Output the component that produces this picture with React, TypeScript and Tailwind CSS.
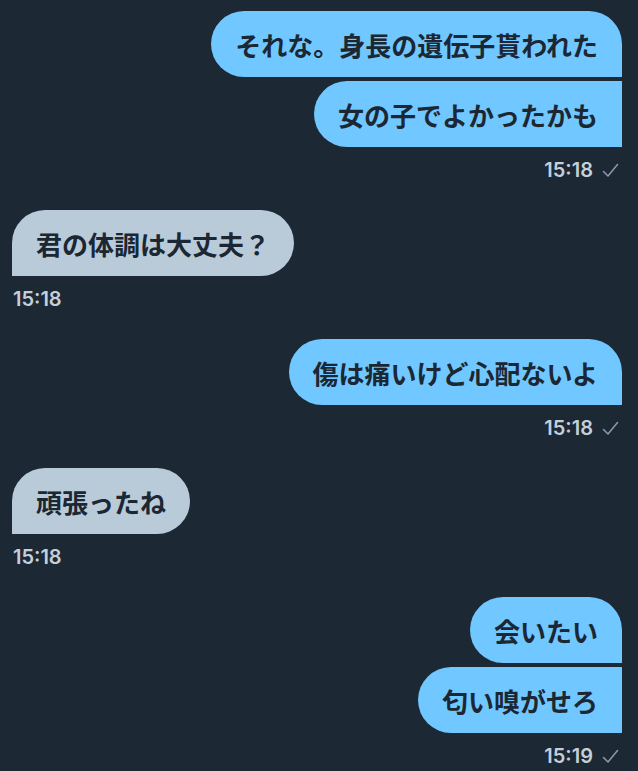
import React from "react";

type Group = { mine: boolean; msgs: string[]; time: string };

const groups: Group[] = [
  { mine: true, msgs: ["それな。身長の遺伝子貰われた", "女の子でよかったかも"], time: "15:18" },
  { mine: false, msgs: ["君の体調は大丈夫？"], time: "15:18" },
  { mine: true, msgs: ["傷は痛いけど心配ないよ"], time: "15:18" },
  { mine: false, msgs: ["頑張ったね"], time: "15:18" },
  { mine: true, msgs: ["会いたい", "匂い嗅がせろ"], time: "15:19" },
];

function Check() {
  return (
    <svg width="17" height="15" viewBox="0 0 17 15" fill="none" className="ml-[9px]">
      <path d="M1.5 8.5 L6 13 L15.5 1.5" stroke="#8a98a6" strokeWidth="1.6" strokeLinecap="round" strokeLinejoin="round" />
    </svg>
  );
}

function Bubble({ text, mine, first }: { text: string; mine: boolean; first: boolean }) {
  const shape = mine
    ? `rounded-l-[33px] ${first ? "rounded-tr-[33px]" : ""}`
    : `rounded-r-[33px] ${first ? "rounded-tl-[33px]" : ""}`;
  return (
    <div
      className={`h-[66px] flex items-center px-6 text-[26px] font-bold text-[#1b2733] ${
        mine ? "bg-[#71c7ff]" : "bg-[#b9cbd9]"
      } ${shape}`}
    >
      {text}
    </div>
  );
}

export default function App() {
  return (
    <div
      className="w-[638px] h-[771px] bg-[#1c2834] overflow-hidden px-3 pt-[11px] flex flex-col"
      style={{ fontFamily: '"Noto Sans CJK JP", "Noto Sans", sans-serif' }}
    >
      {groups.map((g, i) => (
        <div key={i} className={`flex flex-col ${g.mine ? "items-end pr-1" : "items-start"} mb-[30px]`}>
          <div className={`flex flex-col gap-1 ${g.mine ? "items-end" : "items-start"}`}>
            {g.msgs.map((m, j) => (
              <Bubble key={j} text={m} mine={g.mine} first={j === 0} />
            ))}
          </div>
          <div
            className={`mt-[13px] h-5 flex items-center text-[20px] font-semibold text-[#c5cfd9] ${
              g.mine ? "pr-[3px]" : "pl-[1px]"
            }`}
            style={{ fontFamily: '"Inter", "Liberation Sans", sans-serif' }}
          >
            <span>{g.time}</span>
            {g.mine && <Check />}
          </div>
        </div>
      ))}
    </div>
  );
}
